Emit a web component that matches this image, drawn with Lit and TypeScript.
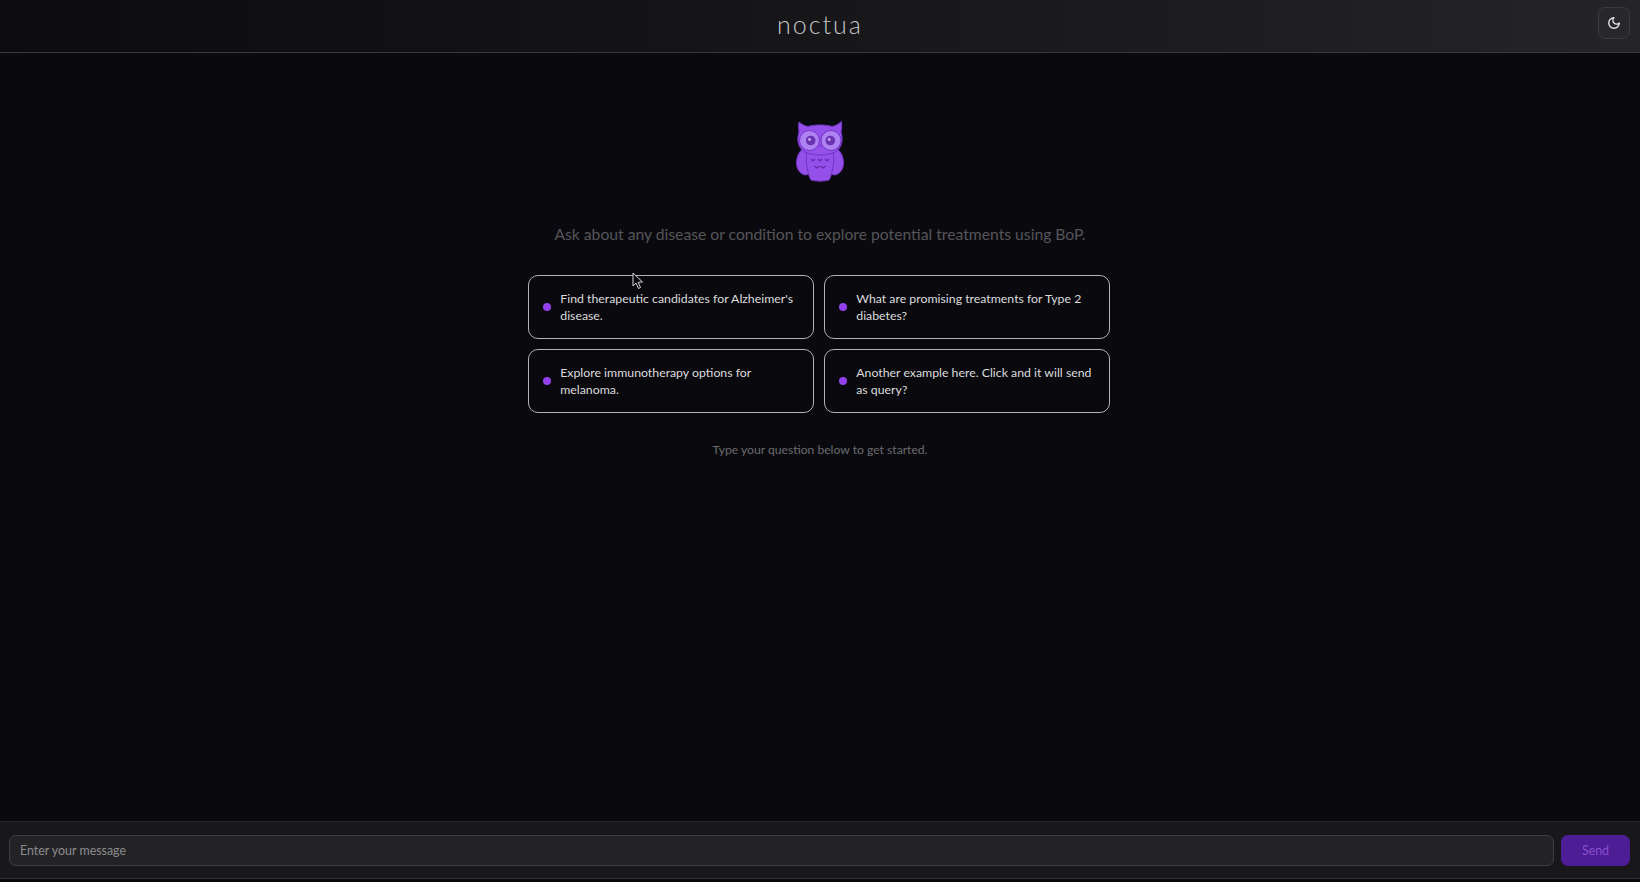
import { LitElement, html, css, svg } from "lit";
import { customElement } from "lit/decorators.js";

const owl = svg`
<svg class="owl" viewBox="0 0 48 62" width="48" height="62" aria-hidden="true">
  <g stroke="#7434c8" stroke-width="1">
    <path d="M8 28 C3 31 0.500 37 0.500 43 C0.500 49 4 54 9 55 C13 55 15 52 16 47 L16 30 Z" fill="#9550ea"/>
    <path d="M40 28 C45 31 47.500 37 47.500 43 C47.500 49 44 54 39 55 C35 55 33 52 32 47 L32 30 Z" fill="#9550ea"/>
    <path d="M11 30 C10 36 10 42 11 47 C12 52 13 57 15 60 C20 61.500 28 61.500 33 60 C35 57 36 52 37 47 C38 42 38 36 37 30 Z" fill="#9550ea"/>
    <path d="M3 2 C6 4.500 9 6 12 6.500 C18 4.500 30 4.500 36 6.500 C39 6 42 4.500 45.500 1.500 C46 5 45.500 9 45 12 C47.500 20 46 28 39 32 C32 36 16 36 9 32 C2 28 0.500 20 3 12 C2.500 9 2.500 5 3 2 Z" fill="#9550ea"/>
    <circle cx="13.500" cy="20.500" r="10" fill="#ae82f2"/>
    <circle cx="35" cy="20.500" r="10" fill="#ae82f2"/>
  </g>
  <circle cx="14.700" cy="20.500" r="4.800" fill="#6b32b2"/>
  <circle cx="34.300" cy="20.500" r="4.800" fill="#6b32b2"/>
  <circle cx="13.500" cy="19.500" r="1.400" fill="#c9a9f7"/>
  <circle cx="33.200" cy="19.500" r="1.400" fill="#c9a9f7"/>
  <path d="M23 22 L24.200 26.500 L25.500 22 Z" fill="#ae82f2" stroke="#7434c8" stroke-width="0.800"/>
  <g fill="none" stroke="#6428ad" stroke-width="1.200">
    <path d="M15 39 l2 2 l2 -2"/><path d="M22 39 l2 2 l2 -2"/><path d="M29 39 l2 2 l2 -2"/>
    <path d="M18.500 46 l2.500 2 l2.500 -2"/><path d="M24.500 46 l2.500 2 l2.500 -2"/>
  </g>
</svg>`;

const moon = svg`
<svg viewBox="0 0 24 24" width="14" height="14" fill="none" stroke="#e4e4e7" stroke-width="2.400" stroke-linecap="round" stroke-linejoin="round" aria-hidden="true">
  <path d="M12 3a6 6 0 0 0 9 9 9 9 0 1 1-9-9Z"/>
</svg>`;

const cursor = svg`
<svg class="cursor" viewBox="0 0 12 18" width="12" height="18" aria-hidden="true">
  <path d="M1 1 L1 14 L4 11 L6.500 16.500 L8.500 15.500 L6.200 10.300 L10.500 10 Z" fill="#0a0a0e" stroke="#d8d8d8" stroke-width="1"/>
</svg>`;

const prompts = [
  "Find therapeutic candidates for Alzheimer's disease.",
  "What are promising treatments for Type 2 diabetes?",
  "Explore immunotherapy options for melanoma.",
  "Another example here. Click and it will send as query?",
];

@customElement("app-root")
export class AppRoot extends LitElement {
  static styles = css`
    :host {
      display: flex;
      flex-direction: column;
      height: 882px;
      background: #0a0a0e;
      font-family: Lato, "Noto Sans", sans-serif;
      position: relative;
      overflow: hidden;
    }
    .header {
      flex: none;
      height: 53px;
      box-sizing: border-box;
      display: flex;
      align-items: center;
      justify-content: center;
      position: relative;
      background: linear-gradient(90deg, #0c0c0f 0%, #141417 40%, #1d1d20 75%, #252528 100%);
      border-bottom: 1px solid #3b3b3f;
    }
    .brand {
      font-size: 25px;
      font-weight: 300;
      letter-spacing: 2px;
      color: #c4c4c6;
      line-height: 1;
      margin-top: -3px;
    }
    .theme {
      position: absolute;
      right: 10px;
      top: 7px;
      width: 32px;
      height: 32px;
      box-sizing: border-box;
      padding: 0;
      border: 1px solid #3a3a3f;
      border-radius: 7px;
      background: #28282c;
      display: flex;
      align-items: center;
      justify-content: center;
    }
    .main {
      flex: 1;
      display: flex;
      flex-direction: column;
      align-items: center;
      padding-top: 67px;
      min-height: 0;
    }
    .owl { display: block; }
    .lead {
      margin: 40px 0 0;
      font-size: 15.700px;
      line-height: 24px;
      color: #55555a;
    }
    .grid {
      margin-top: 29px;
      margin-left: -1.500px;
      display: grid;
      grid-template-columns: 286px 286px;
      gap: 10px 10px;
    }
    .card {
      box-sizing: border-box;
      height: 64px;
      display: flex;
      align-items: center;
      gap: 9px;
      padding: 0 10px 0 14px;
      border: 1px solid #b4b4b6;
      border-radius: 10px;
      background: #0a0a0e;
      color: #dcdcde;
      font: inherit;
      font-size: 12.300px;
      line-height: 17.300px;
      text-align: left;
    }
    .dot {
      flex: none;
      width: 8px;
      height: 8px;
      border-radius: 50%;
      background: #9340ee;
    }
    .hint {
      margin: 28px 0 0;
      font-size: 12.150px;
      line-height: 18px;
      color: #6a6a6f;
    }
    .footer {
      flex: none;
      height: 58px;
      box-sizing: border-box;
      margin-bottom: 3px;
      display: flex;
      align-items: center;
      gap: 7px;
      padding: 0 10px 0 9px;
      background: #18181b;
      border-top: 1px solid #27272a;
      border-bottom: 1px solid #303034;
    }
    .input {
      flex: 1;
      box-sizing: border-box;
      height: 31px;
      padding: 0 10px;
      display: flex;
      align-items: center;
      border: 1px solid #3f3f43;
      border-radius: 7px;
      background: #232326;
      color: #8c8c90;
      font-size: 12.400px;
    }
    .send {
      flex: none;
      box-sizing: border-box;
      width: 69px;
      height: 31px;
      padding: 0;
      border: none;
      border-radius: 7px;
      background: #4c1d95;
      color: #8b4fd0;
      font: inherit;
      font-size: 12.400px;
    }
    .cursor {
      position: absolute;
      left: 632px;
      top: 272px;
    }
  `;

  render() {
    return html`
      <header class="header">
        <div class="brand">noctua</div>
        <button class="theme" aria-label="Toggle theme">${moon}</button>
      </header>
      <main class="main">
        ${owl}
        <p class="lead">Ask about any disease or condition to explore potential treatments using BoP.</p>
        <div class="grid">
          ${prompts.map(
            (p) => html`<button class="card"><span class="dot"></span><span>${p}</span></button>`
          )}
        </div>
        <p class="hint">Type your question below to get started.</p>
      </main>
      <footer class="footer">
        <div class="input">Enter your message</div>
        <button class="send">Send</button>
      </footer>
      ${cursor}
    `;
  }
}
